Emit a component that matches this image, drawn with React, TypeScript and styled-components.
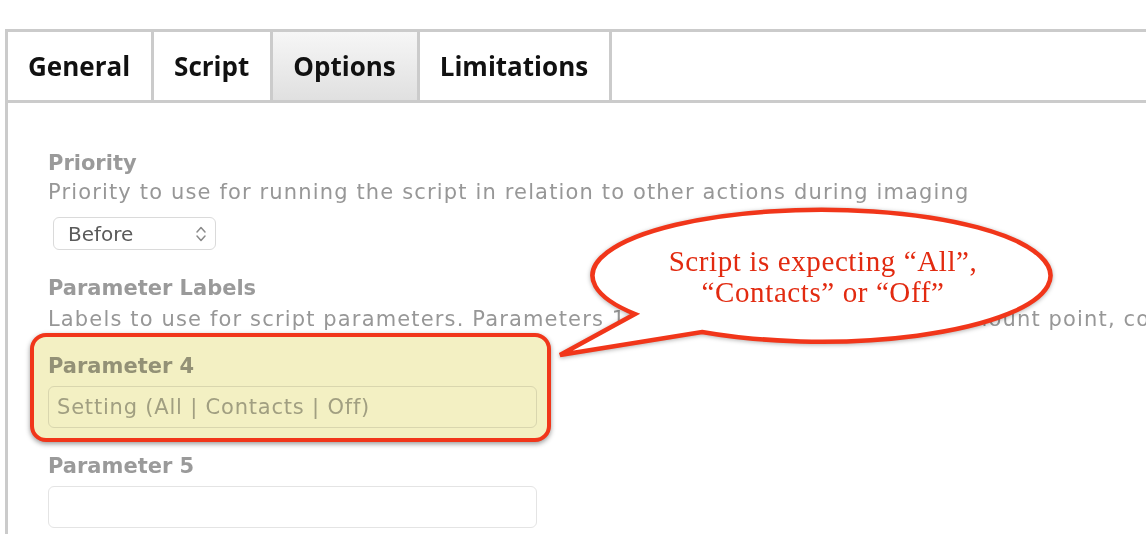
import React from 'react';
import styled, { createGlobalStyle } from 'styled-components';

const GlobalStyle = createGlobalStyle`
  html, body { margin: 0; padding: 0; background: #ffffff; overflow: hidden; }
  body { font-family: "DejaVu Sans", Verdana, sans-serif; }
  *, *::before, *::after { box-sizing: border-box; }
`;

const Page = styled.div`
  position: relative;
  width: 1146px;
  height: 534px;
  padding: 29px 0 0 5px;
  overflow: hidden;
`;

const Panel = styled.div`
  height: 100%;
  border-left: 3px solid #cbcbcb;
`;

const TabBar = styled.div`
  display: flex;
  height: 74px;
  border-top: 3px solid #cbcbcb;
  border-bottom: 3px solid #cbcbcb;
`;

const Tab = styled.div<{ $active?: boolean }>`
  display: flex;
  align-items: center;
  justify-content: center;
  padding: 0 21px 0 20px;
  border-right: 3px solid #cbcbcb;
  font-family: "Open Sans", "DejaVu Sans", sans-serif;
  font-weight: 700;
  font-size: 26px;
  color: #111111;
  background: ${(p) => (p.$active ? 'linear-gradient(#f6f6f6, #e0e0e0)' : '#ffffff')};
`;

const Content = styled.div`
  display: flex;
  flex-direction: column;
  align-items: flex-start;
  padding: 46px 0 0 40px;
`;

const Field = styled.div<{ $mt?: number }>`
  position: relative;
  display: flex;
  flex-direction: column;
  align-items: flex-start;
  margin-top: ${(p) => p.$mt ?? 0}px;
`;

const FieldLabel = styled.div`
  font-weight: 700;
  font-size: 21px;
  line-height: 28px;
  color: #9a9a9a;
  white-space: nowrap;
`;

const FieldHelp = styled.div<{ $mt?: number }>`
  font-size: 21px;
  line-height: 30px;
  letter-spacing: 1.15px;
  color: #979797;
  white-space: nowrap;
  margin-top: ${(p) => p.$mt ?? 0}px;
`;

const SelectBox = styled.div`
  display: flex;
  align-items: center;
  justify-content: space-between;
  width: 163px;
  height: 33px;
  margin: 10px 0 0 5px;
  padding: 0 8px 0 14px;
  border: 1px solid #dadada;
  border-radius: 6px;
  background: #ffffff;
  font-size: 20px;
  color: #5a5a5a;
`;

const TextInput = styled.input`
  width: 489px;
  height: 42px;
  margin-top: 6px;
  padding: 0 8px;
  border: 1px solid #e4e4e4;
  border-radius: 6px;
  background: #ffffff;
  font-family: "DejaVu Sans", Verdana, sans-serif;
  font-size: 21px;
  letter-spacing: 0.8px;
  color: #555;
  outline: none;
  &::placeholder { color: #a9a9a9; }
`;

const Highlight = styled.div`
  position: absolute;
  left: -18px;
  top: -19px;
  right: -14px;
  bottom: -14px;
  border: 4px solid #f1361a;
  border-radius: 16px;
  background: #f3f0c3;
  mix-blend-mode: multiply;
  box-shadow: 0 2px 5px rgba(0, 0, 0, 0.4);
  pointer-events: none;
`;

const Callout = styled.div`
  position: absolute;
  left: 550px;
  top: 200px;
  width: 546px;
  height: 170px;
  pointer-events: none;
`;

const CalloutShape = styled.svg`
  position: absolute;
  left: 0;
  top: 0;
  overflow: visible;
  filter: drop-shadow(0 1px 2px rgba(0, 0, 0, 0.3));
`;

const CalloutText = styled.div`
  position: absolute;
  left: 0;
  top: 46px;
  width: 546px;
  text-align: center;
  font-family: "Liberation Serif", "Times New Roman", serif;
  font-size: 29px;
  line-height: 30.5px;
  letter-spacing: 0.6px;
  color: #e22a10;
`;

const Chevrons = () => (
  <svg width="12" height="20" viewBox="0 0 12 20" fill="none" stroke="#8a8a8a" strokeWidth="1.5" strokeLinecap="round" strokeLinejoin="round">
    <path d="M2 8 L6 3.5 L10 8" />
    <path d="M2 12 L6 16.5 L10 12" />
  </svg>
);

export default function App() {
  return (
    <>
      <GlobalStyle />
      <Page>
        <Panel>
          <TabBar>
            <Tab>General</Tab>
            <Tab>Script</Tab>
            <Tab $active>Options</Tab>
            <Tab>Limitations</Tab>
          </TabBar>
          <Content>
            <Field>
              <FieldLabel>Priority</FieldLabel>
              <FieldHelp>Priority to use for running the script in relation to other actions during imaging</FieldHelp>
              <SelectBox>
                <span>Before</span>
                <Chevrons />
              </SelectBox>
            </Field>
            <Field $mt={24}>
              <FieldLabel>Parameter Labels</FieldLabel>
              <FieldHelp $mt={2}>
                Labels to use for script parameters. Parameters 1 through 3 are predefined as mount point, computer name, and username
              </FieldHelp>
            </Field>
            <Field $mt={18}>
              <FieldLabel>Parameter 4</FieldLabel>
              <TextInput placeholder="Setting (All | Contacts | Off)" readOnly />
              <Highlight />
            </Field>
            <Field $mt={24}>
              <FieldLabel>Parameter 5</FieldLabel>
              <TextInput readOnly />
            </Field>
          </Content>
        </Panel>
        <Callout>
          <CalloutShape width="546" height="170" viewBox="0 0 546 170">
            <path
              d="M 85 114 A 229 66 0 1 1 152 132 L 10 155 Z"
              fill="#ffffff"
              stroke="#f1361a"
              strokeWidth="4.5"
              strokeLinejoin="miter"
            />
          </CalloutShape>
          <CalloutText>
            Script is expecting “All”,
            <br />
            “Contacts” or “Off”
          </CalloutText>
        </Callout>
      </Page>
    </>
  );
}
